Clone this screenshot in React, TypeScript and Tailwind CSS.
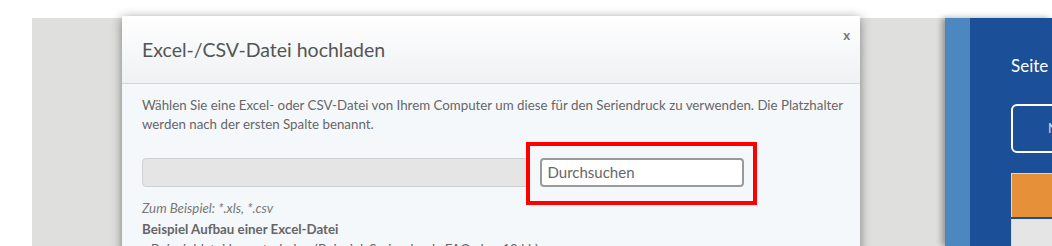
export default function App() {
  return (
    <div className="relative h-[246px] w-[1052px] overflow-hidden bg-white font-['Lato',sans-serif]">
      <div className="flex h-full pt-[18px]">
        <div className="w-[32px] shrink-0 bg-white" />
        <div className="min-w-0 flex-1 bg-[#dfdfdd]" />
        <aside className="flex w-[107px] shrink-0 shadow-[-3px_0_6px_rgba(0,0,0,0.35)]">
          <div className="w-[25px] shrink-0 bg-[#4d87bf]" />
          <div className="min-w-0 flex-1 overflow-hidden bg-[#1b4f98] pl-[41px] pt-[36px]">
            <div className="whitespace-nowrap text-[17px] leading-[24px] text-white">Seite</div>
            <div className="mt-[26px] h-[49px] w-[80px] rounded-[6px] border-2 border-white pl-[35px] pt-[9px]">
              <span className="text-[13px] leading-none text-[#bfe4ff]">Neu</span>
            </div>
            <div className="mt-[20px] h-[44px] w-[80px] border-l border-t border-[#d8d8d8] bg-[#e6903a]" />
            <div className="mt-[2px] h-[40px] w-[80px] border-l border-[#d8d8d8] bg-[#e5e5e5]" />
          </div>
        </aside>
      </div>

      <div className="absolute left-[122px] top-[16px] h-[260px] w-[738px] bg-[#f5f8fb] shadow-[0_2px_10px_rgba(0,0,0,0.45)]">
        <div className="flex h-[68px] items-start justify-between border-b border-[#d3d6d9] bg-gradient-to-b from-[#ffffff] to-[#eff1f3] pl-[20px] pr-[10px]">
          <h2 className="pt-[21px] text-[19.5px] leading-[26px] text-[#555]">Excel-/CSV-Datei hochladen</h2>
          <button className="pt-[11px] text-[13px] font-bold leading-[16px] text-[#777]">x</button>
        </div>
        <div className="px-[20px] pt-[12px] text-[13.3px] text-[#666]">
          <p className="whitespace-nowrap leading-[19px]">
            Wählen Sie eine Excel- oder CSV-Datei von Ihrem Computer um diese für den Seriendruck zu verwenden. Die Platzhalter
            <br />
            werden nach der ersten Spalte benannt.
          </p>
          <div className="mt-[8px] flex items-center">
            <div className="mt-[-3px] h-[29px] w-[388px] rounded-[4px] border border-[#d0d0d0] bg-[#e5e5e5]" />
            <div className="ml-[-4px] flex h-[63px] w-[231px] items-center justify-center border-4 border-[#ff0000] pb-[3px]">
              <button className="h-[29px] w-[204px] rounded-[4px] border-2 border-[#9a9a9a] bg-white pl-[6px] text-left text-[15px] leading-none text-[#666]">
                Durchsuchen
              </button>
            </div>
          </div>
          <p className="-mt-[6px] italic leading-[18px] text-[#777]">Zum Beispiel: *.xls, *.csv</p>
          <p className="mt-[3px] font-bold leading-[18px] text-[#666]">Beispiel Aufbau einer Excel-Datei</p>
          <p className="mt-[2px] leading-[18px] text-[#666]">» Beispieldatei herunterladen (Beispiel_Seriendruck_FAQ.xlsx, 10 kb)</p>
        </div>
      </div>
    </div>
  )
}
